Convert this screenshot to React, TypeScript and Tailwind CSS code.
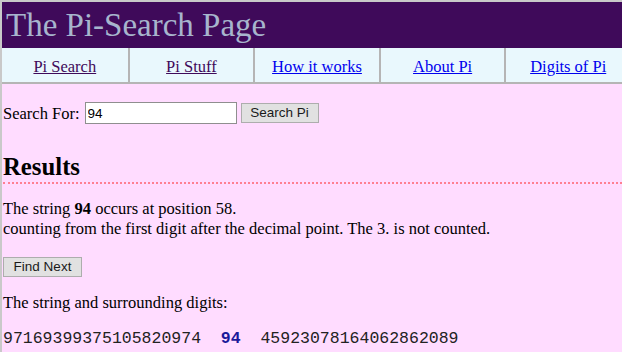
export default function App() {
  const links = [
    { t: "Pi Search", v: true },
    { t: "Pi Stuff", v: true },
    { t: "How it works", v: false },
    { t: "About Pi", v: false },
    { t: "Digits of Pi", v: false },
  ];
  return (
    <div className="w-[622px] h-[352px] overflow-hidden bg-[#ffdcff] border-t-2 border-l-2 border-[#c9c9c9] font-['Liberation_Serif','Times_New_Roman',serif] text-[16.5px] text-black">
      <header className="h-[46px] bg-[#3f0a5a] pl-[4px] pt-[4px]">
        <h1 className="text-[33px] leading-[38px] font-normal text-[#a7b5cd] whitespace-nowrap">
          The Pi-Search Page
        </h1>
      </header>
      <nav className="w-[628px] grid grid-cols-5 h-[36px] bg-[#e9f8fd] border-b-2 border-[#b5b5b5]">
        {links.map((l, i) => (
          <div
            key={l.t}
            className={
              "flex items-center justify-center pt-[3px] " +
              (i > 0 ? "border-l-2 border-[#b5b5b5]" : "")
            }
          >
            <a
              href="#"
              className={
                "underline leading-[19px] whitespace-nowrap " +
                (l.v ? "text-[#3f0a5a]" : "text-[#0000ee]")
              }
            >
              {l.t}
            </a>
          </div>
        ))}
      </nav>
      <main className="pl-px">
        <div className="mt-[18px] flex items-center h-[22px]">
          <span className="leading-[19px]">Search For:</span>
          <input
            defaultValue="94"
            className="ml-[5px] w-[152px] h-[22px] bg-white border border-[#8f8f8f] px-[2px] font-['Liberation_Sans',Arial,sans-serif] text-[13.5px] text-black outline-none"
          />
          <button className="ml-[4px] w-[78px] h-[20px] bg-[#e1e1e1] border border-[#adadad] font-['Liberation_Sans',Arial,sans-serif] text-[13.5px] text-[#1a1a1a] leading-[18px]">
            Search Pi
          </button>
        </div>
        <h2 className="mt-[29px] text-[24.75px] font-bold leading-[28.5px] border-b-2 border-dotted border-[#ff7f92]">
          Results
        </h2>
        <p className="mt-[15px] leading-[20px]">
          The string <b>94</b> occurs at position 58.
          <br />
          counting from the first digit after the decimal point. The 3. is not counted.
        </p>
        <button className="mt-[18px] w-[79px] h-[20px] bg-[#e1e1e1] border border-[#adadad] font-['Liberation_Sans',Arial,sans-serif] text-[13.5px] text-[#1a1a1a] leading-[18px] block">
          Find Next
        </button>
        <p className="mt-[16px] leading-[20px]">The string and surrounding digits:</p>
        <pre className="mt-[16px] leading-[20px] font-['Liberation_Mono','Courier_New',monospace] text-[16.5px] text-[#222]">
          {"97169399375105820974  "}
          <b className="text-[#1a1a9a]">94</b>
          {"  45923078164062862089"}
        </pre>
      </main>
    </div>
  );
}
